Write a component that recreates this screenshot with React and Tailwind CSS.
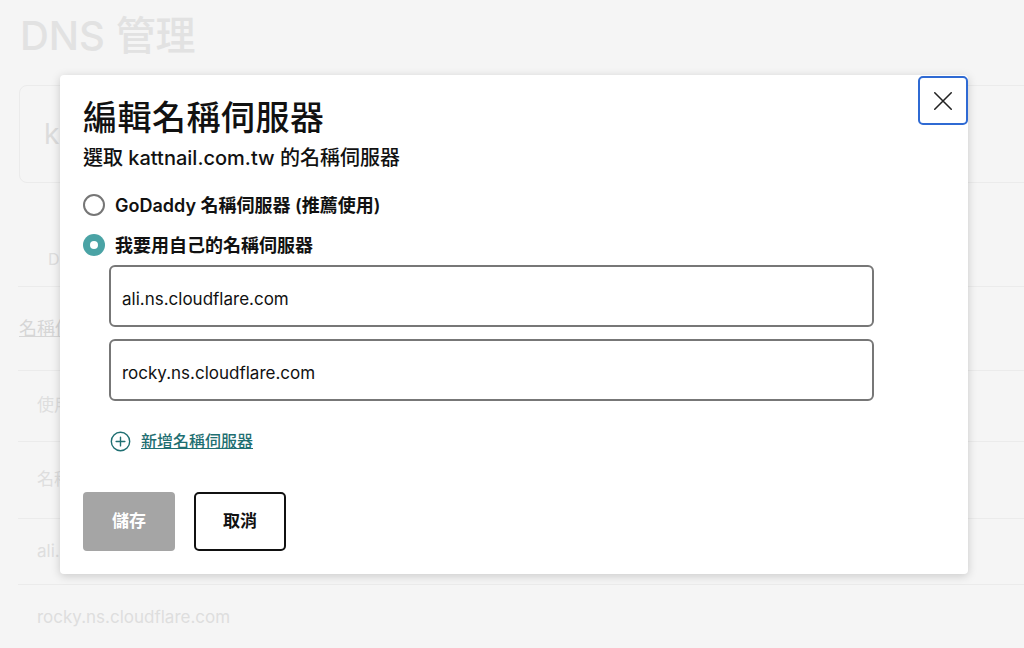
import React from "react";

const font = { fontFamily: 'Inter, "Noto Sans CJK TC", "Noto Sans", sans-serif' };

function PlusCircle() {
  return (
    <svg width="21" height="21" viewBox="0 0 24 24" fill="none" stroke="currentColor" strokeWidth="1.6" strokeLinecap="round">
      <circle cx="12" cy="12" r="10.5" />
      <path d="M12 7v10M7 12h10" />
    </svg>
  );
}

function Radio({ checked }) {
  if (checked) {
    return (
      <span className="w-[22px] h-[22px] rounded-full bg-[#4aa3a5] flex items-center justify-center shrink-0">
        <span className="w-[8px] h-[8px] rounded-full bg-white" />
      </span>
    );
  }
  return <span className="w-[22px] h-[22px] rounded-full border-2 border-[#767676] bg-white shrink-0" />;
}

export default function App() {
  const servers = ["ali.ns.cloudflare.com", "rocky.ns.cloudflare.com"];

  return (
    <div className="relative w-[1024px] h-[648px] overflow-hidden bg-[#f5f5f5]" style={font}>
      {/* faded page underneath */}
      <div className="text-[#dedede]">
        <h1 className="pl-[20px] pt-[12px] text-[40px] leading-[48px] font-medium text-[#e2e2e2]">DNS 管理</h1>
        <div className="ml-[19px] mt-[25px] w-[1040px] h-[98px] border border-[#ebebeb] rounded-lg flex items-center pl-[24px]">
          <span className="text-[28px] text-[#dcdcdc]">kattnail.com.tw</span>
        </div>
        <div className="ml-[48px] mt-[64px] text-[16px] leading-[24px]">DNS 記錄</div>
        <div className="ml-[18px] mt-[15px] border-t border-[#ebebeb]" />
        <div className="ml-[19px] mt-[30px] text-[18px] leading-[24px] underline text-[#d6d6d6]">名稱伺服器</div>
        <div className="ml-[18px] mt-[29px] border-t border-[#ebebeb] h-[71px] flex items-center pl-[19px] text-[17px]">使用自訂名稱伺服器</div>
        <div className="ml-[18px] border-t border-[#ebebeb] h-[77px] flex items-center pl-[19px] text-[17px]">名稱伺服器</div>
        <div className="ml-[18px] border-t border-[#ebebeb] h-[66px] flex items-center pl-[19px] text-[17px]">ali.ns.cloudflare.com</div>
        <div className="ml-[18px] border-t border-[#ebebeb] h-[66px] flex items-center pl-[19px] text-[17px]">rocky.ns.cloudflare.com</div>
      </div>

      {/* dialog */}
      <div className="absolute left-[60px] top-[75px] w-[908px] h-[499px] bg-white rounded-[4px] shadow-[0_2px_10px_rgba(0,0,0,0.18)] px-[23px] pt-[19px] text-[#111111]">
        <button className="absolute right-0 top-[1px] w-[50px] h-[49px] border-2 border-[#2f6ad3] rounded-[5px] bg-white flex items-center justify-center text-[#222]">
          <svg width="22" height="22" viewBox="0 0 24 24" fill="none" stroke="currentColor" strokeWidth="1.7" strokeLinecap="round">
            <path d="M3 3l18 18M21 3L3 21" />
          </svg>
        </button>

        <h2 className="text-[34px] leading-[48px] font-medium tracking-[0.5px]">編輯名稱伺服器</h2>
        <p className="text-[20px] leading-[29px] font-medium mt-[2px]">選取 kattnail.com.tw 的名稱伺服器</p>

        <div className="mt-[19px] flex items-center gap-[10px] h-[26px]">
          <Radio />
          <span className="text-[18px] font-semibold">GoDaddy 名稱伺服器 (推薦使用)</span>
        </div>
        <div className="mt-[14px] flex items-center gap-[10px] h-[26px]">
          <Radio checked />
          <span className="text-[18px] font-semibold">我要用自己的名稱伺服器</span>
        </div>

        <div className="ml-[26px] mt-[7px] w-[765px] flex flex-col gap-[12px]">
          {servers.map((s) => (
            <div key={s} className="h-[62px] border-2 border-[#777777] rounded-[6px] flex items-center pl-[11px] pt-[8px] text-[17px]">
              {s}
            </div>
          ))}
        </div>

        <div className="ml-[27px] mt-[28px] flex items-center gap-[10px] text-[#1f6f72]">
          <PlusCircle />
          <a className="text-[16px] leading-[24px] underline font-medium">新增名稱伺服器</a>
        </div>

        <div className="mt-[39px] flex gap-[19px]">
          <button className="w-[92px] h-[59px] rounded-[4px] bg-[#a5a5a5] text-white text-[17px] font-semibold">儲存</button>
          <button className="w-[92px] h-[59px] rounded-[5px] border-2 border-[#111] bg-white text-[#111] text-[17px] font-semibold">取消</button>
        </div>
      </div>
    </div>
  );
}
